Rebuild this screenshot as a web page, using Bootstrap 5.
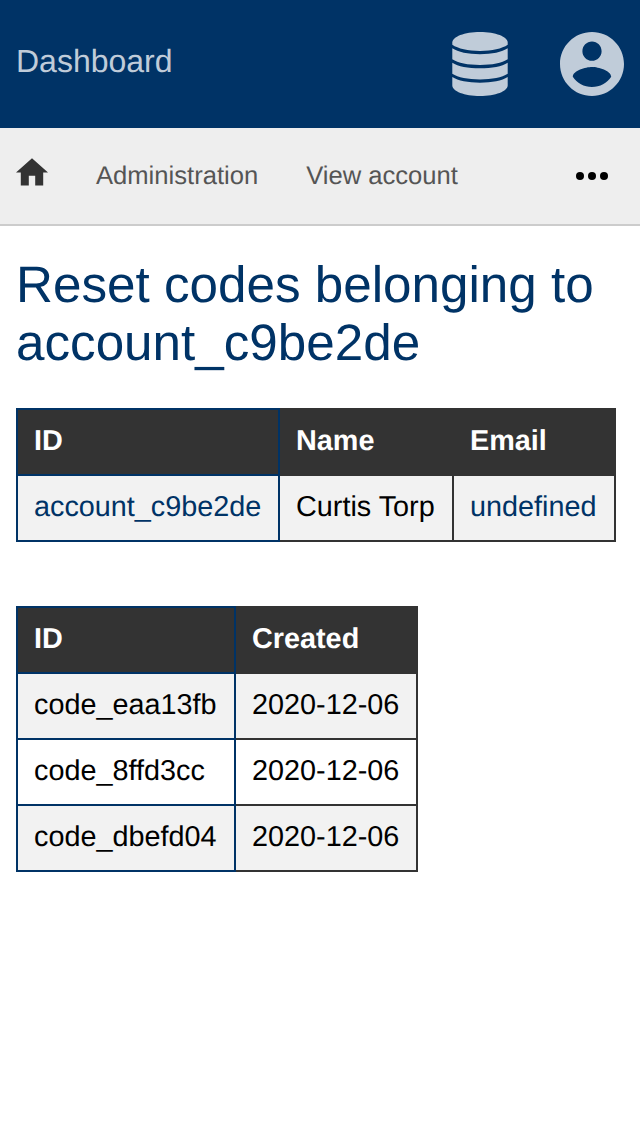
<!DOCTYPE html>
<html lang="en">
<head>
<meta charset="utf-8">
<meta name="viewport" content="width=device-width, initial-scale=1">
<title>Reset codes</title>
<link href="https://cdn.jsdelivr.net/npm/bootstrap@5.3.0/dist/css/bootstrap.min.css" rel="stylesheet">
<style>
  body { font-family: "Liberation Sans", Arial, sans-serif; font-size: 28.8px; line-height: 32px; color: #000; background: #fff; text-rendering: geometricPrecision; }
  a { text-decoration: none; color: #036; }
  .top-bar { height: 128px; background: #036; color: #c0ccd9; }
  .top-bar a { color: inherit; }
  .top-bar .brand-link { font-size: 32px; line-height: 36px; margin-top: -7px; }
  .top-icons { gap: 52px; }
  .sub-bar { height: 98px; background: #eee; border-bottom: 2px solid #ccc; font-size: 25.6px; padding-right: 32px; }
  .sub-bar a { color: #555; }
  .sub-links { gap: 48px; }
  .home-icon { margin-top: -9px; }
  h1 { font-size: 51.2px; line-height: 58px; font-weight: 400; color: #036; margin: 0 0 36px; }
  main { padding-top: 30px; }
  .data-grid { border-collapse: collapse; table-layout: fixed; }
  .data-grid th, .data-grid td { border: 2px solid #333; padding: 15px 16px 17px; white-space: nowrap; text-align: left; }
  .data-grid th { background: #333; color: #fff; }
  .data-grid tr > :first-child { border-color: #036; }
  .data-grid tbody tr:nth-child(odd) td { background: #f2f2f2; }
</style>
</head>
<body>
<header class="top-bar d-flex align-items-center justify-content-between px-3">
  <a class="brand-link" href="#">Dashboard</a>
  <div class="top-icons d-flex">
    <a class="d-flex" href="#" aria-label="Data">
      <svg width="56" height="64" viewBox="0 0 56 64" fill="currentColor">
        <path d="M.3 10.500C.3 4.700 12.500 0 28 0s27.700 4.700 27.700 10.500v2.300C50 16.700 40 18.900 28 18.900S6 16.700.3 12.800z"/>
        <path d="M.3 16.300C6 20.200 16 22.200 28 22.200s22-2 27.700-5.900v11C50 31 40 33 28 33S6 31 .3 27.300z"/>
        <path d="M.3 30.700C6 34.500 16 36.300 28 36.300s22-1.800 27.700-5.600v11C50 45.400 40 47.400 28 47.400S6 45.400.3 41.700z"/>
        <path d="M.3 45.100C6 48.900 16 50.700 28 50.700s22-1.800 27.700-5.600v8.400C55.700 59.300 43.500 64 28 64S.3 59.300.3 53.500z"/>
      </svg>
    </a>
    <a class="d-flex" href="#" aria-label="Account">
      <svg width="64" height="64" viewBox="2 2 20 20" fill="currentColor"><path d="M12 2C6.480 2 2 6.480 2 12s4.480 10 10 10 10-4.480 10-10S17.520 2 12 2zm0 3c1.660 0 3 1.340 3 3s-1.340 3-3 3-3-1.340-3-3 1.340-3 3-3zm0 14.200c-2.500 0-4.710-1.280-6-3.220.03-1.990 4-3.080 6-3.080 1.990 0 5.970 1.090 6 3.080-1.290 1.940-3.500 3.220-6 3.220z"/></svg>
    </a>
  </div>
</header>
<nav class="sub-bar d-flex align-items-center justify-content-between ps-3">
  <div class="sub-links d-flex align-items-center">
    <a class="home-icon d-flex" href="#" aria-label="Home">
      <svg width="32" height="28" viewBox="2 2.875 20 17.500" fill="#333"><path d="M10 20v-6h4v6h5v-8h3L12 3 2 12h3v8z"/></svg>
    </a>
    <a href="#">Administration</a>
    <a href="#">View account</a>
  </div>
  <svg width="32" height="8" viewBox="0 0 32 8"><circle cx="4" cy="4" r="4"/><circle cx="16" cy="4" r="4"/><circle cx="28" cy="4" r="4"/></svg>
</nav>
<main class="px-3">
  <h1>Reset codes belonging to account_c9be2de</h1>
  <table class="data-grid" style="width:600px">
    <colgroup><col style="width:262px"><col style="width:174px"><col style="width:162px"></colgroup>
    <thead><tr><th>ID</th><th>Name</th><th>Email</th></tr></thead>
    <tbody><tr><td><a href="#">account_c9be2de</a></td><td>Curtis Torp</td><td><a href="#">undefined</a></td></tr></tbody>
  </table>
  <table class="data-grid" style="width:402px;margin-top:64px">
    <colgroup><col style="width:218px"><col style="width:182px"></colgroup>
    <thead><tr><th>ID</th><th>Created</th></tr></thead>
    <tbody>
      <tr><td>code_eaa13fb</td><td>2020-12-06</td></tr>
      <tr><td>code_8ffd3cc</td><td>2020-12-06</td></tr>
      <tr><td>code_dbefd04</td><td>2020-12-06</td></tr>
    </tbody>
  </table>
</main>
<script src="https://cdn.jsdelivr.net/npm/bootstrap@5.3.0/dist/js/bootstrap.bundle.min.js"></script>
</body>
</html>
